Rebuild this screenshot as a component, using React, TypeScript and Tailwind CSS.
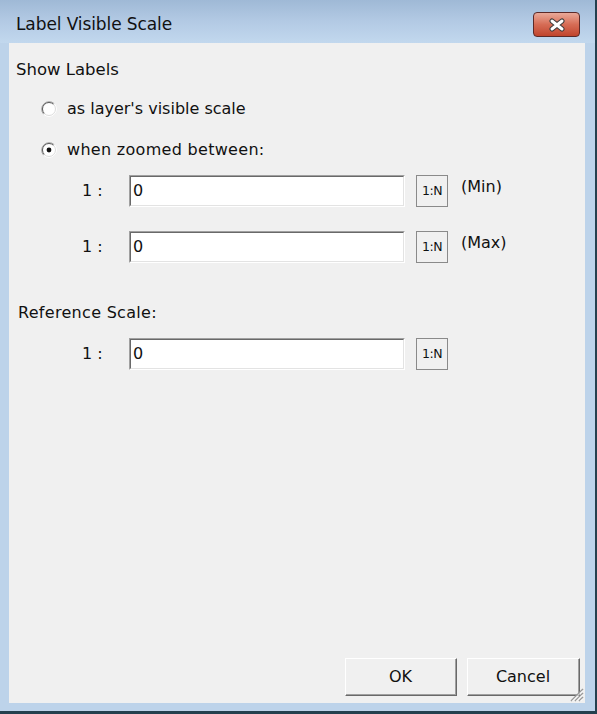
import React from "react";

const font = { fontFamily: '"DejaVu Sans", "Liberation Sans", sans-serif' };

function Radio({ checked }: { checked?: boolean }) {
	return (
		<svg width="16" height="16" viewBox="0 0 16 16" className="shrink-0">
			<circle cx="8" cy="8" r="7.5" fill="#ffffff" />
			<path d="M2.7 13.3 A7.5 7.5 0 0 1 13.3 2.7" fill="none" stroke="#a0a0a0" strokeWidth="1" />
			<path d="M3.4 12.6 A6.5 6.5 0 0 1 12.6 3.4" fill="none" stroke="#5a5a5a" strokeWidth="1" />
			<path d="M13.3 2.7 A7.5 7.5 0 0 1 2.7 13.3" fill="none" stroke="#ffffff" strokeWidth="1" />
			<path d="M12.6 3.4 A6.5 6.5 0 0 1 3.4 12.6" fill="none" stroke="#dcdcdc" strokeWidth="1" />
			{checked && <circle cx="8" cy="8" r="2.4" fill="#111111" />}
		</svg>
	);
}

function ScaleInput() {
	return (
		<div className="w-[276px] h-[32px] border-t border-l border-[#a0a0a0] border-r border-b border-r-[#ffffff] border-b-[#ffffff] bg-white">
			<div className="w-full h-full border-t border-l border-[#696969] border-r border-b border-r-[#e3e3e3] border-b-[#e3e3e3] flex items-center pl-[2px] text-[16px] text-[#111]">
				0
			</div>
		</div>
	);
}

function ScaleRow({ suffix }: { suffix?: string }) {
	return (
		<div className="flex items-start h-[32px]">
			<div className="w-[47px] pl-[73px] box-content h-[32px] flex items-center text-[16px] whitespace-pre">1 :</div>
			<ScaleInput />
			<button className="ml-[11px] w-[32px] h-[32px] border border-[#8a8a8a] bg-[#f0f0f0] text-[12.5px] leading-none flex items-center justify-center text-[#111] tracking-[-0.5px]" style={font}>
				1:N
			</button>
			{suffix && <div className="ml-[13px] h-[24px] leading-[24px] text-[16px]">{suffix}</div>}
		</div>
	);
}

function DlgButton({ label, width }: { label: string; width: string }) {
	return (
		<div className={`${width} h-[38px] border-t border-l border-white border-r border-b border-r-[#696969] border-b-[#696969] bg-[#f0f0f0]`}>
			<div className="w-full h-full border-r border-b border-[#a0a0a0] flex items-center justify-center text-[16px] text-[#111]">
				{label}
			</div>
		</div>
	);
}

export default function App() {
	return (
		<div className="w-[597px] h-[714px] flex flex-col bg-[#bdd3ea] border-r-2 border-b-[3px] border-[#24404e] text-[#111]" style={font}>
			<div className="h-[43px] shrink-0 flex items-start pl-[16px] pr-[15px] bg-gradient-to-b from-[#9fb9d6] via-[#b3cae4] to-[#c2d8ee]">
				<div className="mt-[14px] leading-[20px] text-[17px] tracking-[-0.1px] text-[#111]">Label Visible Scale</div>
				<div className="ml-auto mt-[12px] w-[47px] h-[25px] rounded-[4px] border border-[#5c2a28] bg-gradient-to-b from-[#e9a999] via-[#d66c55] to-[#c0442c] flex items-center justify-center">
					<svg width="20" height="14" viewBox="0 0 20 14">
						<path d="M5 3 L15 11 M15 3 L5 11" stroke="#3a3a3a" strokeWidth="5" strokeLinecap="round" />
						<path d="M5 3 L15 11 M15 3 L5 11" stroke="#ffffff" strokeWidth="3" strokeLinecap="round" />
					</svg>
				</div>
			</div>
			<div className="flex-1 flex pl-[9px] pr-[10px] pb-[8px]">
				<div className="flex-1 bg-[#f0f0f0] flex flex-col relative">
					<div className="mt-[17px] pl-[7px] h-[20px] leading-[20px] text-[16.5px]">Show Labels</div>
					<div className="mt-[19px] pl-[32px] h-[20px] flex items-center gap-[10px]">
						<Radio />
						<span className="text-[16px]">as layer's visible scale</span>
					</div>
					<div className="mt-[21px] pl-[32px] h-[20px] flex items-center gap-[10px]">
						<Radio checked />
						<span className="text-[16px] tracking-[0.3px]">when zoomed between:</span>
					</div>
					<div className="mt-[15px]">
						<ScaleRow suffix="(Min)" />
					</div>
					<div className="mt-[24px]">
						<ScaleRow suffix="(Max)" />
					</div>
					<div className="mt-[40px] pl-[9px] h-[20px] leading-[20px] text-[16px] tracking-[0.3px]">Reference Scale:</div>
					<div className="mt-[15px]">
						<ScaleRow />
					</div>
					<div className="mt-auto flex justify-end gap-[10px] pr-[5px] pb-[7px]">
						<DlgButton label="OK" width="w-[112px]" />
						<DlgButton label="Cancel" width="w-[113px]" />
					</div>
					<svg className="absolute right-[1px] bottom-[1px]" width="16" height="16" viewBox="0 0 16 16">
						<path d="M15 3 L3 15 M15 7 L7 15 M15 11 L11 15" stroke="#9a9a9a" strokeWidth="1.5" />
						<path d="M15 4.5 L4.5 15 M15 8.5 L8.5 15 M15 12.5 L12.5 15" stroke="#ffffff" strokeWidth="1" />
					</svg>
				</div>
			</div>
		</div>
	);
}
